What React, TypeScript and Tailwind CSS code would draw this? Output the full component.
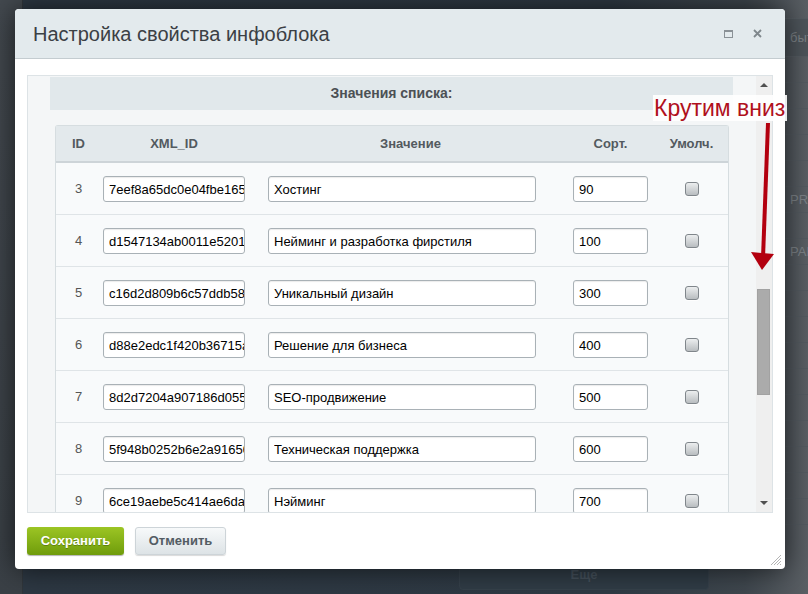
import React from "react";

type Row = { id: number; xml: string; value: string; sort: number };

const ROWS: Row[] = [
  { id: 3, xml: "7eef8a65dc0e04fbe1650d4b9a3c1e27", value: "Хостинг", sort: 90 },
  { id: 4, xml: "d1547134ab0011e52017cfa0b8e3d421", value: "Нейминг и разработка фирстиля", sort: 100 },
  { id: 5, xml: "c16d2d809b6c57ddb58e2a1f90b3c744", value: "Уникальный дизайн", sort: 300 },
  { id: 6, xml: "d88e2edc1f420b36715a9c0e4d2b8f10", value: "Решение для бизнеса", sort: 400 },
  { id: 7, xml: "8d2d7204a907186d055c3e1b9a0f6d27", value: "SEO-продвижение", sort: 500 },
  { id: 8, xml: "5f948b0252b6e2a91650c7d3e8a14b92", value: "Техническая поддержка", sort: 600 },
  { id: 9, xml: "6ce19aebe5c414ae6da0b27f3c91e845", value: "Нэйминг", sort: 700 },
];

const inputCls =
  "h-[26px] rounded-[3px] border border-[#a9b1b6] bg-white pl-[5px] text-[13px] text-black shadow-[inset_0_1px_1px_rgba(0,0,0,0.08)] outline-none";

function Checkbox() {
  return (
    <span className="block h-[14px] w-[14px] rounded-[3px] border border-[#80868b] bg-[linear-gradient(#eceeef,#b9bdc0)] shadow-[0_1px_0_rgba(255,255,255,0.8)]" />
  );
}

function BackgroundPage() {
  return (
    <div className="flex h-full w-full">
      <div className="w-[23px] border-r border-[#30363b] bg-[linear-gradient(#43494f,#3a4046)]" />
      <div className="flex flex-1 flex-col bg-[linear-gradient(90deg,#2d3843,#2f3a44_75%,#3f474e_92%,#5a5f64)]">
        <div className="flex min-h-0 flex-1">
          <div className="flex-1" />
          {/* table behind the modal, only its right edge shows */}
          <div className="flex w-[40px] flex-col overflow-hidden whitespace-nowrap text-[13px] text-[#7c8287]">
            <div className="h-[18px] shrink-0" />
            <div className="flex h-[39px] shrink-0 items-center border-y border-[#555c62] bg-[#4d545a] pl-[22px]">бытия</div>
            {Array.from({ length: 18 }).map((_, i) => (
              <div key={i} className="flex h-[26px] shrink-0 items-center border-b border-[#535a60] pl-[22px]">
                {i === 5 ? "PRI" : i === 7 ? "PAR" : ""}
              </div>
            ))}
          </div>
        </div>
        <div className="h-[34px] shrink-0">
          <div className="ml-[436px] flex h-[30px] w-[250px] items-center justify-center rounded-[4px] border border-[#36414b] bg-[#303c46] text-[13px] font-bold text-[#45515c]">
            Еще
          </div>
        </div>
      </div>
    </div>
  );
}

function Modal() {
  return (
    <div className="absolute left-[15px] top-[9px] flex h-[560px] w-[770px] flex-col rounded-[4px] bg-white shadow-[0_0_28px_rgba(0,0,0,0.65)]">
      {/* header */}
      <div className="flex h-[50px] shrink-0 items-center justify-between rounded-t-[4px] border-b border-[#c4ccd0] bg-[#e3eaed] pl-[18px] pr-[23px]">
        <span className="text-[20px] text-[#3b4045]">Настройка свойства инфоблока</span>
        <div className="flex items-center gap-[20px]">
          <span className="block h-[8px] w-[9px] border border-t-2 border-[#8a9196]" />
          <svg width="9" height="9" viewBox="0 0 9 9">
            <path d="M1 1 L8 8 M8 1 L1 8" stroke="#7f878c" strokeWidth="1.8" />
          </svg>
        </div>
      </div>

      {/* body */}
      <div className="flex flex-1 flex-col px-[12px] pt-[16px]">
        <div className="flex h-[438px] overflow-hidden border border-[#dde3e6] bg-[#f4f6f7]">
          <div className="flex-1 overflow-hidden pl-[22px] pr-[23px] pt-[1px]">
            <div className="flex h-[33px] items-center justify-center bg-[#e1e8eb] text-[14px] font-bold text-[#4c5155]">
              Значения списка:
            </div>
            <div className="mt-[15px] pl-[5px] pr-[4px]">
              <div className="rounded-t-[3px] border-x border-t border-[#d6dde0] bg-[#f8fafb]">
                <div className="grid h-[37px] grid-cols-[45px_163px_305px_92px_1fr] items-center border-b-2 border-[#cdd4d8] bg-[#e3e9ec] text-[13px] font-bold text-[#535a5f]">
                  <div className="text-center">ID</div>
                  <div className="ml-[2px] w-[142px] text-center">XML_ID</div>
                  <div className="pr-[12px] text-center">Значение</div>
                  <div className="ml-[4px] w-[75px] text-center">Сорт.</div>
                  <div className="pr-[6px] text-center">Умолч.</div>
                </div>
                {ROWS.map((r) => (
                  <div
                    key={r.id}
                    className="grid h-[52px] grid-cols-[45px_163px_305px_92px_1fr] items-center border-b border-[#dfe4e7]"
                  >
                    <div className="pt-[1px] text-center text-[13px] text-[#555]">{r.id}</div>
                    <div className="pl-[2px] pt-[1px]">
                      <input readOnly value={r.xml} className={`${inputCls} w-[142px]`} />
                    </div>
                    <div className="pl-[4px] pt-[1px]">
                      <input readOnly value={r.value} className={`${inputCls} w-[268px]`} />
                    </div>
                    <div className="pl-[4px] pt-[1px]">
                      <input readOnly value={String(r.sort)} className={`${inputCls} w-[75px]`} />
                    </div>
                    <div className="flex justify-center pr-[6px] pt-[1px]">
                      <Checkbox />
                    </div>
                  </div>
                ))}
              </div>
            </div>
          </div>

          {/* scrollbar */}
          <div className="flex w-[16px] flex-col bg-[#efefef]">
            <div className="flex h-[18px] items-center justify-center">
              <svg width="8" height="4" viewBox="0 0 8 4">
                <path d="M0 4 L4 0 L8 4 Z" fill="#505050" />
              </svg>
            </div>
            <div className="flex-1">
              <div className="ml-[1px] mt-[195px] h-[106px] w-[13px] border border-[#a2a2a2] bg-[#ababab]" />
            </div>
            <div className="flex h-[18px] items-center justify-center">
              <svg width="8" height="4" viewBox="0 0 8 4">
                <path d="M0 0 L8 0 L4 4 Z" fill="#505050" />
              </svg>
            </div>
          </div>
        </div>

        {/* buttons */}
        <div className="mt-[14px] flex gap-[11px]">
          <button className="h-[28px] w-[97px] rounded-[3px] bg-[linear-gradient(#9cc524,#6f9c0b)] text-[13px] font-bold text-white shadow-[0_1px_1px_rgba(0,0,0,0.3)] [text-shadow:0_1px_0_rgba(0,0,0,0.25)]">
            Сохранить
          </button>
          <button className="h-[28px] w-[91px] rounded-[3px] border border-[#cdd4d8] bg-[linear-gradient(#f7f9fa,#dde3e6)] text-[13px] font-bold text-[#535c63] shadow-[0_1px_1px_rgba(0,0,0,0.15)]">
            Отменить
          </button>
        </div>
      </div>

      {/* resize grip */}
      <svg className="absolute bottom-[3px] right-[3px]" width="12" height="12" viewBox="0 0 12 12">
        <path d="M11 1 L1 11 M11 4 L4 11 M11 7 L7 11 M11 10 L10 11" stroke="#b5b5b5" strokeWidth="1" />
      </svg>
    </div>
  );
}

export default function App() {
  return (
    <div className="relative h-[594px] w-[808px] overflow-hidden font-['Liberation_Sans',Arial,sans-serif]">
      <BackgroundPage />
      <Modal />

      {/* annotation */}
      <div className="absolute left-[653px] top-[95px] flex h-[26px] w-[134px] items-center bg-white/90 pl-[1px] text-[23px] leading-none text-[#b0101c]">
        Крутим вниз
      </div>
      <svg className="absolute left-[745px] top-[120px]" width="40" height="155" viewBox="745 120 40 155">
        <path d="M768 123 L763 258" stroke="#b3000f" strokeWidth="4" />
        <path d="M751 252 L774 254 L762 270 Z" fill="#b3000f" />
      </svg>
    </div>
  );
}
